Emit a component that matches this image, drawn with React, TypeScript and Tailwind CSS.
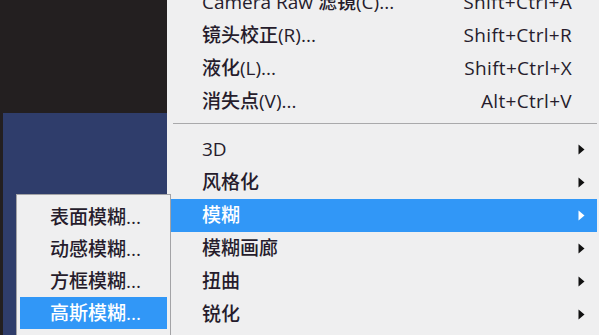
type MenuItem = {
  label: string;
  shortcut?: string;
  sub?: boolean;
  active?: boolean;
};

const topItems: MenuItem[] = [
  { label: 'Camera Raw 滤镜(C)...', shortcut: 'Shift+Ctrl+A' },
  { label: '镜头校正(R)...', shortcut: 'Shift+Ctrl+R' },
  { label: '液化(L)...', shortcut: 'Shift+Ctrl+X' },
  { label: '消失点(V)...', shortcut: 'Alt+Ctrl+V' },
];

const filterItems: MenuItem[] = [
  { label: '3D', sub: true },
  { label: '风格化', sub: true },
  { label: '模糊', sub: true, active: true },
  { label: '模糊画廊', sub: true },
  { label: '扭曲', sub: true },
  { label: '锐化', sub: true },
];

const blurItems: MenuItem[] = [
  { label: '表面模糊...' },
  { label: '动感模糊...' },
  { label: '方框模糊...' },
  { label: '高斯模糊...', active: true },
];

const font = "font-['Open_Sans','Noto_Sans_CJK_SC',sans-serif]";

function Arrow({ active }: { active?: boolean }) {
  return (
    <svg width="7" height="11" viewBox="0 0 7 11" className="shrink-0">
      <path d="M0.5 0.5 L6.5 5.5 L0.5 10.5 Z" fill={active ? '#ffffff' : '#111111'} />
    </svg>
  );
}

function Row({ item }: { item: MenuItem }) {
  return (
    <div
      className={`flex h-[33px] items-center pl-[32px] pr-[12px] ${
        item.active ? 'bg-[#3197f7] text-white' : 'text-[#261c2c]'
      }`}
    >
      <span className="flex-1">{item.label}</span>
      {item.shortcut && <span className="mr-[13px] tracking-[0.3px]">{item.shortcut}</span>}
      {item.sub && <Arrow active={item.active} />}
    </div>
  );
}

export default function App() {
  return (
    <div className={`relative flex h-[335px] w-[599px] overflow-hidden bg-[#231f20] text-[19px] font-medium ${font}`}>
      {/* canvas behind the menus */}
      <div className="flex w-[167px] shrink-0 flex-col">
        <div className="h-[113px] bg-[#231f20]" />
        <div className="ml-[3px] flex-1 bg-[#2f3d6b]" />
      </div>

      {/* Filter menu */}
      <div className="-mt-[14px] flex-1 bg-[#efeff0] pl-[3px] pr-[2px]">
        {topItems.map(item => (
          <Row key={item.label} item={item} />
        ))}
        <div className="pb-[9px] pl-[3px] pt-[5px]">
          <div className="h-px bg-[#a9a9ab]" />
        </div>
        {filterItems.map(item => (
          <Row key={item.label} item={item} />
        ))}
      </div>

      {/* Blur submenu */}
      <div className="absolute left-[16px] top-[194px] h-[160px] w-[155px] border border-[#a3a3a6] bg-[#efeff0] px-[3px] pt-[6px]">
        {blurItems.map(item => (
          <div
            key={item.label}
            className={`flex h-[32px] items-center pl-[30px] ${
              item.active ? 'bg-[#3197f7] text-white' : 'text-[#261c2c]'
            }`}
          >
            {item.label}
          </div>
        ))}
      </div>
    </div>
  );
}
